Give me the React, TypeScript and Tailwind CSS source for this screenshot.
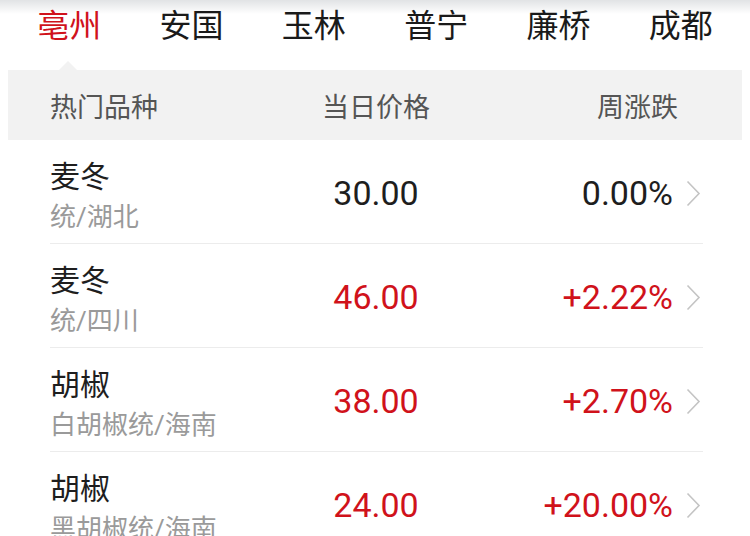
import React from "react";

const tabs = ["亳州", "安国", "玉林", "普宁", "廉桥", "成都"];

type Row = { name: string; sub: string; price: string; change: string; up: boolean };

const rows: Row[] = [
  { name: "麦冬", sub: "统/湖北", price: "30.00", change: "0.00%", up: false },
  { name: "麦冬", sub: "统/四川", price: "46.00", change: "+2.22%", up: true },
  { name: "胡椒", sub: "白胡椒统/海南", price: "38.00", change: "+2.70%", up: true },
  { name: "胡椒", sub: "黑胡椒统/海南", price: "24.00", change: "+20.00%", up: true },
];

const font = "font-['Roboto','Noto_Sans_CJK_SC',sans-serif]";

function Chevron() {
  return (
    <svg width="15" height="27" viewBox="0 0 15 27" fill="none">
      <path d="M1.5 1.5 L13 13.5 L1.5 25.5" stroke="#c4c4c4" strokeWidth="1.6" strokeLinejoin="miter" />
    </svg>
  );
}

export default function App() {
  return (
    <div className={`w-[750px] h-[536px] overflow-hidden bg-white ${font}`}>
      <div className="h-[70px] flex px-[8px] bg-[linear-gradient(to_bottom,#e1e3e5,#ffffff_14px)]">
        {tabs.map((t, i) => (
          <div
            key={t}
            className={`flex-1 text-center text-[32px] leading-[52px] ${i === 0 ? "text-[#d0121b]" : "text-[#1a1a1a]"}`}
          >
            {t}
          </div>
        ))}
      </div>
      <div className="relative mx-[8px] h-[70px] bg-[#f2f2f2] flex items-center pt-[6px] pl-[42px] pr-[64px] text-[27px] text-[#555]">
        <div className="absolute -top-[9px] left-[51px] w-0 h-0 border-x-[9px] border-x-transparent border-b-[9px] border-b-[#f2f2f2]" />
        <div className="w-[226px]">热门品种</div>
        <div className="w-[200px] text-center">当日价格</div>
        <div className="flex-1 text-right">周涨跌</div>
      </div>
      <div className="ml-[50px] w-[653px]">
        {rows.map((r, i) => (
          <div key={i} className="h-[104px] flex items-center border-b border-[#ececec]">
            <div className="w-[226px] mt-[10px]">
              <div className="text-[30px] leading-[40px] text-[#1e1e1e]">{r.name}</div>
              <div className="text-[26px] leading-[40px] text-[#9a9a9a]">{r.sub}</div>
            </div>
            <div className={`w-[200px] text-center text-[34px] mt-[4px] ${r.up ? "text-[#d0121b]" : "text-[#1e1e1e]"}`}>
              {r.price}
            </div>
            <div className={`flex-1 text-right text-[34px] mt-[4px] ${r.up ? "text-[#d0121b]" : "text-[#1e1e1e]"}`}>
              {r.change}
            </div>
            <div className="ml-[13px] mr-[2px] mt-[4px] flex items-center">
              <Chevron />
            </div>
          </div>
        ))}
      </div>
    </div>
  );
}
